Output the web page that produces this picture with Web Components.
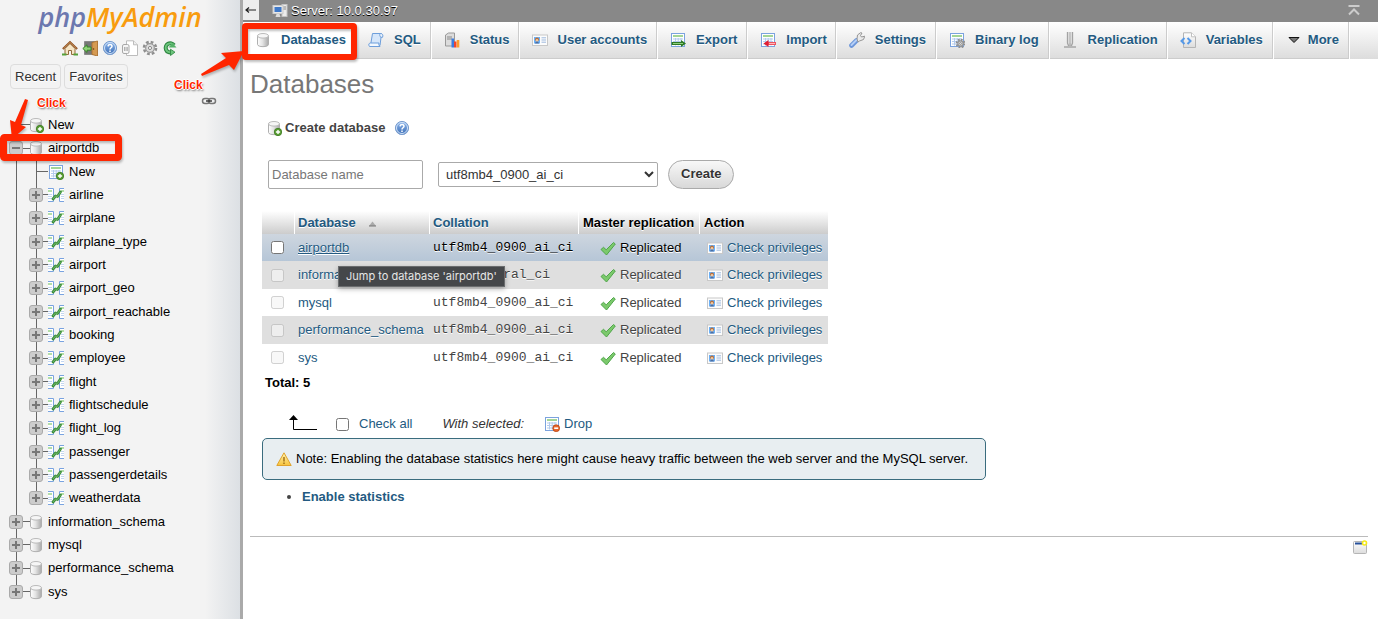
<!DOCTYPE html>
<html lang="en">
<head>
<meta charset="utf-8">
<title>phpMyAdmin - Databases</title>
<style>
  html, body { margin: 0; min-height: 100%; background: #fff; }
  body { font: 13px/20px "Liberation Sans", Arial, sans-serif; color: #000; }
</style>
</head>
<body>
<pma-app></pma-app>

<script>
const DEFS = `
<linearGradient id="cyl"><stop offset="0" stop-color="#fff"/><stop offset=".45" stop-color="#e4e4e4"/><stop offset="1" stop-color="#a9a9a9"/></linearGradient>
<linearGradient id="pg" x2="0" y2="1"><stop offset="0" stop-color="#fff"/><stop offset="1" stop-color="#dcdcdc"/></linearGradient>
<linearGradient id="bl" x2="0" y2="1"><stop offset="0" stop-color="#8fb8ee"/><stop offset="1" stop-color="#3b6db5"/></linearGradient>
<linearGradient id="yl" x2="0" y2="1"><stop offset="0" stop-color="#fff3b0"/><stop offset="1" stop-color="#f7c33c"/></linearGradient>`;
const CYL = `<path d="M2.500 3.800v8.600c0 3 11 3 11 0V3.800z" fill="url(#cyl)" stroke="#b0b0b0"/><ellipse cx="8" cy="3.800" rx="5.500" ry="2.300" fill="#f6f6f6" stroke="#bbb"/>`;
const PLUS = `<circle cx="12" cy="12" r="3.700" fill="#5a9e35" stroke="#39771c" stroke-width=".8"/><path d="M12 9.900v4.200M9.900 12h4.200" stroke="#fff" stroke-width="1.400"/>`;
const GRID = `<rect x="1.500" y="1.500" width="13" height="13" fill="#fff" stroke="#7ba3de"/><path d="M3 4h10" stroke="#8ccb7c" stroke-width="1.600"/><path d="M3 7h10M3 9.500h10M3 12h10M5.500 6v7.500M8.200 6v7.500M11 6v7.500" stroke="#b3cbed"/>`;
const GEAR = (cx, cy, r) => `<circle cx="${cx}" cy="${cy}" r="${r}" fill="none" stroke="#8e8e8e" stroke-width="2.600" stroke-dasharray="${r * .45} ${r * .335}"/><circle cx="${cx}" cy="${cy}" r="${r * .72}" fill="#ddd" stroke="#979797" stroke-width="1.200"/><circle cx="${cx}" cy="${cy}" r="${r * .26}" fill="#fff" stroke="#888"/>`;
const ICONS = {
  db: CYL,
  dbnew: CYL + PLUS,
  tablenew: GRID + PLUS,
  tabledrop: GRID + `<circle cx="12.200" cy="12.200" r="3.400" fill="#e8662a" stroke="#b9420f" stroke-width=".8"/><path d="M10.200 12.200h4" stroke="#fff" stroke-width="1.600"/>`,
  table: `<path d="M0 1h6v14H0zM11 1h5v14h-5z" fill="#fff"/><path d="M0 1.500h5.500v13H0M16 1.500h-4.500v13H16" fill="none" stroke="#79a3e0"/><path d="M0 4h4M13 4h3" stroke="#9bd38b" stroke-width="1.500"/><path d="M0 7.500h4M0 9.500h4M0 11.500h4M13 7.500h3M13 9.500h3M13 11.500h3" stroke="#c3d6f1"/><path d="M5 12l2.500-3 2 .500 3-4.500" fill="none" stroke="#3d8e3c" stroke-width="2.800" stroke-linecap="round" stroke-linejoin="round"/><path d="M5 12l2.500-3 2 .500 3-4.500" fill="none" stroke="#6db766" stroke-width="1"/>`,
  home: `<path d="M3 8.500v6h3.500v-4h3v4H13v-6L8 3.500z" fill="#f5e5c5" stroke="#946b3c"/><path d="M.8 9L8 2l7.200 7" fill="none" stroke="#8a4f20" stroke-width="1.800"/><path d="M1.500 8.300L8 2.300l6.500 6" fill="none" stroke="#d59a5f" stroke-width=".7"/><path d="M0 14.500h4.500M11.500 14.500H16" stroke="#55a13b" stroke-width="1.800"/>`,
  exit: `<path d="M2.500 1.500h10v13h-10z" fill="#777" stroke="#8b8b8b"/><path d="M10 2.500l5.500-1.500v15l-5.500-1.500z" fill="#d59a52" stroke="#a86f30" stroke-width=".9"/><circle cx="11.500" cy="9" r=".8" fill="#65400f"/><path d="M.8 8.500L5 4.800v2.200h4v3.200H5v2.200z" fill="#8fd277" stroke="#2f8122" stroke-width=".9"/>`,
  help: `<circle cx="8" cy="8" r="6.600" fill="url(#bl)" stroke="#7a9ecf"/><circle cx="8" cy="8" r="5.500" fill="none" stroke="#d3e4f9"/><path d="M6.100 6.400C6.200 3.900 10 4 10 6.300c0 1.500-2 1.500-2 3.200M8 10.600v1.500" fill="none" stroke="#fff" stroke-width="1.500"/>`,
  docs: `<path d="M4.500 .8h7l4 4v10.700h-11z" fill="#fff" stroke="#bcbcbc"/><path d="M11.500 .8v4h4" fill="#eee" stroke="#bcbcbc"/><rect x=".5" y="4.500" width="6.500" height="9" rx="1.500" fill="#f5f5f5" stroke="#a8a8a8"/><path d="M2.500 7v4M4 7v4M5.300 7v4" stroke="#a0a0a0" stroke-width=".8"/>`,
  gear: GEAR(8, 8, 6),
  reload: `<path d="M12 5.200A4.600 4.600 0 1 0 9.500 12.300" fill="none" stroke="#2d8540" stroke-width="4"/><path d="M11.800 5.400A4.400 4.400 0 1 0 9.500 12" fill="none" stroke="#6cc57c" stroke-width="2"/><path d="M6.500 7.500h8l-4-4.500z" fill="#55b268"/><path d="M8.500 9.200l4.500 3-4.500 3.300z" fill="#6cc57c" stroke="#2d8540" stroke-width=".8"/>`,
  link: `<rect x="1.500" y="5.500" width="7" height="5" rx="2.500" fill="none" stroke="#777" stroke-width="1.500"/><rect x="7.500" y="5.500" width="7" height="5" rx="2.500" fill="none" stroke="#777" stroke-width="1.500"/><path d="M5 8h6" stroke="#333" stroke-width="1.400"/>`,
  server: `<rect x="10" y="1.500" width="5" height="12" fill="#ececec" stroke="#c4c4c4"/><path d="M11 4h3M11 6h3" stroke="#888"/><rect x="1" y="2.500" width="10" height="8" fill="#e8e8e8" stroke="#ccc"/><rect x="2.500" y="4" width="7" height="5" fill="#3f79c9"/><path d="M4.500 11h3l1 3h-5z" fill="#ddd"/>`,
  sql: `<path d="M4.500 1.500h9L12 13.500H2.500z" fill="#d5e6fa" stroke="#6d9edb"/><path d="M12.500 1.500c-1.500 1-.5 3.500.5 3.800h1.500c1-2 0-3.800-2-3.800z" fill="#eef5fd" stroke="#6d9edb"/><path d="M1.500 14.500c-1.500-2-.5-3.500 1-3.500h8.500c-.5 1.500 0 2.500 1 3.500z" fill="#f3f8fe" stroke="#6d9edb"/>`,
  status: `<path d="M1.500 3l3-2h6v11l-2 2h-7z" fill="#dcdcdc" stroke="#999"/><path d="M3 5h5M3 7h5" stroke="#8a8a8a"/><path d="M7.500 6.500h2.500v9H7.500z" fill="#3b7ce0"/><path d="M10 9.500h2.500v6H10z" fill="#f1432f"/><path d="M12.700 8h2.600v7.500h-2.600z" fill="#ff9d2c"/>`,
  users: `<rect x=".5" y="3" width="15" height="10.500" fill="#fcfcfc" stroke="#c8c8c8"/><rect x="2" y="5" width="6" height="6.500" fill="#6cb0f5"/><circle cx="5" cy="7.500" r="2" fill="#b96f3a"/><circle cx="5" cy="8.300" r="1.200" fill="#f3c99d"/><path d="M3 11.500c0-2.500 4-2.500 4 0z" fill="#4a6fa5"/><path d="M9.500 5.800h4.500M9.500 8h4.500M9.500 10.200h4.500" stroke="#9db9de"/>`,
  export: GRID + `<path d="M1.500 11.500h10" stroke="#2e7a26" stroke-width="3"/><path d="M11 8l5 3.500-5 3.500z" fill="#2e7a26"/><path d="M3 11.500h10" stroke="#8ed07e"/>`,
  import: GRID + `<path d="M8 11.500h8" stroke="#ee5360" stroke-width="3"/><path d="M8.500 8l-5 3.500 5 3.500z" fill="#e01f34"/><path d="M9 11.500h6" stroke="#ffb6b9"/>`,
  wrench: `<path d="M2.500 13.500l5-5" stroke="#6b95d9" stroke-width="4.600" stroke-linecap="round"/><path d="M2.500 13l5-5" stroke="#b4cef6" stroke-width="2" stroke-linecap="round"/><path d="M8 7l.5-4 3-2.300 1.500.3-1.500 2.500 1 1.500 3.300-.8-1.300 3.300-4 1.500-1.500 1z" fill="#e9e9e9" stroke="#969696"/>`,
  binlog: GRID + GEAR(11.5, 11.5, 3.6),
  repl: `<path d="M5.500 0v11l1.200 3M10.500 0v11l-1.200 3M8 0v14" fill="none" stroke="#a3a3a3" stroke-width="1.300"/><path d="M6.800 0v11M9.200 0v11" stroke="#d8d8d8"/><path d="M2 15h12" stroke="#aaa" stroke-width="1.600"/>`,
  vars: `<path d="M3.500 .8h8l4 4v10.700h-12z" fill="url(#pg)" stroke="#b5b5b5"/><path d="M11.500 .8v4h4" fill="#fff" stroke="#c0c0c0"/><path d="M4.500 6L1.500 9l3 3M7.500 6l3 3-3 3" fill="none" stroke="#5599e8" stroke-width="2"/>`,
  more: `<path d="M3 5.500h10L8 10.500z" fill="#777" stroke="#111"/>`,
  sort: `<path d="M5 11h7L8.500 6.500z" fill="#aaa"/><path d="M5 11h7" stroke="#777"/>`,
  check: `<path d="M1 9.500l2.500-2.200 2.700 2.500L13.500 2.500l1.800 1.500-8.800 11z" fill="#7cc96c" stroke="#4fa64a"/>`,
  warn: `<path d="M8 1.800L15.200 14.500H.8z" fill="url(#yl)" stroke="#dfa22c" stroke-linejoin="round"/><path d="M8 6v4.500M8 11.500v1.500" stroke="#a9781e" stroke-width="1.600"/>`,
  window: `<rect x="1.500" y="2.500" width="13" height="12" rx="1" fill="url(#pg)" stroke="#b5b5b5"/><path d="M3 4.500h7" stroke="#27509b" stroke-width="2"/><circle cx="12.500" cy="4" r="2" fill="#fff" stroke="#f5ea18" stroke-width="1.600"/>`,
  top: `<path d="M2.500 3h11" stroke="#ccc" stroke-width="2"/><path d="M3 11.500l5-5 5 5" fill="none" stroke="#ccc" stroke-width="2"/>`,
  back: `<path d="M3 8h10M6 5.500L3 8l3 2.500" fill="none" stroke="#222" stroke-width="1.200"/>`
};

function define(name, html, setup) {
  const tpl = document.createElement('template');
  tpl.innerHTML = html;
  customElements.define(name, class extends HTMLElement {
    constructor() {
      super();
      this.attachShadow({ mode: 'open' }).append(tpl.content.cloneNode(true));
    }
    connectedCallback() { if (setup) setup(this, this.shadowRoot); }
  });
}

define('pma-icon', `<style>:host{display:block;flex:none;width:16px;height:16px}svg{display:block}</style>
<svg width="16" height="16" viewBox="0 0 16 16" aria-hidden="true"></svg>`, (el, root) => {
  root.querySelector('svg').innerHTML = `<defs>${DEFS}</defs>` + (ICONS[el.getAttribute('name')] || '');
});

define('pma-logo', `<style>
  :host{display:block;text-align:center;height:33px}
  a{font:italic 600 27px/33px "Open Sans","Noto Sans",sans-serif;color:#f89c0e;text-decoration:none}
  span{color:#6c78af}
</style><a href="#"><span>php</span>MyAdmin</a>`);

define('pma-tree-row', `<style>
  :host{display:grid;grid-template-columns:14px 16px auto;column-gap:5px;align-items:center;height:23px;padding-left:9px;
    background:linear-gradient(#666,#666) 16px 0/1px 100% no-repeat,linear-gradient(#666,#666) 16px 50%/14px 1px no-repeat}
  :host(:nth-child(3n+2)){height:24px}
  :host([first]){background-position:16px 12px,16px 50%}
  :host([last]){background-size:1px 50%,14px 1px}
  :host([level="1"]){padding-left:29px;
    background:linear-gradient(#666,#666) 16px 0/1px 100% no-repeat,linear-gradient(#666,#666) 36px 50%/12px 1px no-repeat,linear-gradient(#666,#666) 36px 0/1px 100% no-repeat}
  :host([level="1"][end]){background-size:1px 100%,12px 1px,1px 50%}
  button{width:14px;height:14px;padding:0;border:1px solid #aaa;border-radius:3px;background:#ccc;display:block}
  :host([leaf]) button{visibility:hidden}
  svg{display:block}
  :host([open]) .v{display:none}
  a{color:#000;text-decoration:none;line-height:20px;margin-left:-1px}
  :host([level="1"]) a{margin-left:0}
</style>
<button type="button" aria-label="Toggle"><svg width="12" height="12" viewBox="0 0 12 12" stroke="#777" stroke-width="2"><path d="M2 6h8"/><path class="v" d="M6 2v8"/></svg></button>
<pma-icon></pma-icon><a href="#"><slot></slot></a>`, (el, root) => {
  const icon = document.createElement('pma-icon');
  icon.setAttribute('name', el.getAttribute('icon'));
  root.querySelector('pma-icon').replaceWith(icon);
});

define('pma-sidebar', `<style>
  :host{display:block;flex:none;width:240px;border-right:3px solid #aaa;background:linear-gradient(90deg,#f3f3f3 0,#f3f3f3 205px,#dce0e4 240px)}
  .tools{display:flex;justify-content:center;gap:4px;padding:7px 0 8px}
  .tools a{display:block}
  .quick{display:flex;gap:3px;padding-left:10px}
  .quick button{font:inherit;color:#333;height:25px;padding:0 4px;border:1px solid #ddd;border-radius:4px;background:#f3f3f3;text-shadow:0 1px 0 #fff}
  .link{display:flex;justify-content:flex-end;padding:4px 23px 0 0}
  nav{margin-top:4px}
</style>
<pma-logo></pma-logo>
<div class="tools">
  <a href="#" aria-label="Home"><pma-icon name="home"></pma-icon></a>
  <a href="#" aria-label="Log out"><pma-icon name="exit"></pma-icon></a>
  <a href="#" aria-label="Help"><pma-icon name="help"></pma-icon></a>
  <a href="#" aria-label="Documentation"><pma-icon name="docs"></pma-icon></a>
  <a href="#" aria-label="Panel settings"><pma-icon name="gear"></pma-icon></a>
  <a href="#" aria-label="Reload"><pma-icon name="reload"></pma-icon></a>
</div>
<div class="quick"><button type="button">Recent</button><button type="button">Favorites</button></div>
<div class="link"><pma-icon name="link"></pma-icon></div>
<nav>
<pma-tree-row leaf first icon="dbnew">New</pma-tree-row>
<pma-tree-row open icon="db">airportdb</pma-tree-row>
<pma-tree-row leaf level="1" icon="tablenew">New</pma-tree-row>
${['airline','airplane','airplane_type','airport','airport_geo','airport_reachable','booking','employee','flight','flightschedule','flight_log','passenger','passengerdetails','weatherdata'].map((t, i, a) => `<pma-tree-row level="1" icon="table"${i === a.length - 1 ? ' end' : ''}>${t}</pma-tree-row>`).join('')}
<pma-tree-row icon="db">information_schema</pma-tree-row>
<pma-tree-row icon="db">mysql</pma-tree-row>
<pma-tree-row icon="db">performance_schema</pma-tree-row>
<pma-tree-row last icon="db">sys</pma-tree-row>
</nav>`);

define('pma-server-bar', `<style>
  :host{display:flex;align-items:center;height:22px;background:#888;color:#fff;text-shadow:0 1px 0 #000}
  button{width:16px;height:20px;padding:0;border:0;background:#eee;align-self:flex-start}
  .srv{margin-left:13px}
  a{color:#fff;text-decoration:none;margin-left:3px;flex:1}
  .top{margin-right:16px}
</style>
<button type="button" aria-label="Hide panel"><pma-icon name="back"></pma-icon></button>
<pma-icon class="srv" name="server"></pma-icon><a href="#">Server: 10.0.30.97</a><pma-icon class="top" name="top"></pma-icon>`);

define('pma-tab', `<style>
  :host{display:block;box-sizing:border-box;height:37px;border-right:1px solid #fff;box-shadow:inset -1px -1px 0 #ccc}
  a{display:flex;align-items:center;gap:10px;height:35px;padding:0 10px 0 12px;font-weight:bold;color:#235a81;text-decoration:none;text-shadow:0 1px 0 #fff;white-space:nowrap}
  :host(:nth-of-type(3n)) a{padding-right:9px}
  :host([active]){background:#fff;border-right:0;box-shadow:none}
  :host([compact]) a{gap:6px}
</style><a href="#"><pma-icon></pma-icon><slot></slot></a>`, (el, root) => {
  const icon = document.createElement('pma-icon');
  icon.setAttribute('name', el.getAttribute('icon'));
  root.querySelector('pma-icon').replaceWith(icon);
});

define('pma-tabs', `<style>:host{display:flex;height:37px;background:linear-gradient(#fff,#dcdcdc)}</style>
<pma-tab active icon="db">Databases</pma-tab>
<pma-tab icon="sql">SQL</pma-tab>
<pma-tab icon="status">Status</pma-tab>
<pma-tab icon="users">User accounts</pma-tab>
<pma-tab icon="export">Export</pma-tab>
<pma-tab icon="import">Import</pma-tab>
<pma-tab icon="wrench">Settings</pma-tab>
<pma-tab icon="binlog">Binary log</pma-tab>
<pma-tab icon="repl">Replication</pma-tab>
<pma-tab icon="vars">Variables</pma-tab>
<pma-tab compact icon="more">More</pma-tab>`);

define('pma-create-form', `<style>
  :host{display:block;margin-top:19px;padding-left:4px}
  label.title{display:flex;align-items:center;height:20px;font-weight:bold;color:#444;gap:3px}
  .help{margin-left:6px}
  form{display:flex;align-items:center;height:30px;margin:21px 0 0 2px}
  input,select{font:inherit;box-sizing:border-box;border:1px solid #aaa;border-radius:2px;background:#fff;color:#333}
  input{width:155px;height:29px;padding:0 3px}
  input::placeholder{color:#777}
  select{width:220px;height:25px;padding:0 3px;margin:0 10px 0 15px}
  button{font:bold 13px/20px "Liberation Sans",Arial,sans-serif;height:29px;padding:0 12px;border:1px solid #aaa;border-radius:15px;background:linear-gradient(#f8f8f8,#d8d8d8);color:#333;text-shadow:0 1px 0 #fff}
</style>
<label class="title" for="name"><pma-icon name="dbnew"></pma-icon>Create database<pma-icon class="help" name="help"></pma-icon></label>
<form><input id="name" placeholder="Database name"><select aria-label="Collation"><option>utf8mb4_0900_ai_ci</option></select><button type="button">Create</button></form>`);

const DBS = [['airportdb','utf8mb4_0900_ai_ci'],['information_schema','utf8_general_ci'],['mysql','utf8mb4_0900_ai_ci'],['performance_schema','utf8mb4_0900_ai_ci'],['sys','utf8mb4_0900_ai_ci']];
define('pma-db-table', `<style>
  :host{display:block;position:relative;margin-top:22px}
  table{border-collapse:collapse;table-layout:fixed;width:566px}
  th{height:23px;padding:0 4px;text-align:left;color:#000;background:linear-gradient(#fff,#ccc);text-shadow:0 1px 0 #fff;white-space:nowrap}
  th+th{box-shadow:inset 1px 0 0 #fff}
  th+th+th+th{padding-left:5px}
  td{height:27px;padding:0 4px;color:#444;white-space:nowrap;text-shadow:0 1px 0 #fff}
  tr:nth-child(even) td{height:28px;background:#dfdfdf}
  tr.hover td{background:linear-gradient(#ced6df,#b6c6d7);color:#000}
  a{color:#235a81;text-decoration:none}
  tr.hover td:nth-child(2) a{text-decoration:underline}
  th .in,td .in{display:flex;align-items:center;gap:4px}
  th .in{gap:8px}
  .rep{padding-left:18px}
  .act{padding-left:4px}
  td.mono{font-family:"Liberation Mono","Courier New",monospace}
  input{display:block;margin:0 0 0 5px}
  .tip{position:absolute;left:76px;top:55px;box-sizing:border-box;height:21px;padding:0 7px;border:1px solid #6a6c6e;background:#45474a;color:#e6e6e6;font:11px/19px Inter,sans-serif;white-space:nowrap;box-shadow:0 2px 5px rgba(0,0,0,.3)}
  .total{font-weight:bold;line-height:24px;padding-left:3px;text-shadow:0 1px 0 #fff}
</style>
<table>
<colgroup><col style="width:32px"><col style="width:135px"><col style="width:149px"><col style="width:121px"><col style="width:129px"></colgroup>
<thead><tr><th></th><th><a href="#" class="in">Database<pma-icon name="sort"></pma-icon></a></th><th><a href="#">Collation</a></th><th>Master replication</th><th>Action</th></tr></thead>
<tbody>
${DBS.map(([n, c], i) => `<tr${i ? '' : ' class="hover"'}><td><input type="checkbox" aria-label="Select ${n}"${i ? ' disabled' : ''}></td><td><a href="#">${n}</a></td><td class="mono">${c}</td><td><span class="in rep"><pma-icon name="check"></pma-icon>Replicated</span></td><td><a href="#" class="in act"><pma-icon name="users"></pma-icon>Check privileges</a></td></tr>`).join('')}
</tbody></table>
<div class="total">Total: 5</div>
<div class="tip" role="tooltip">Jump to database 'airportdb'</div>`);

define('pma-bulk-actions', `<style>
  :host{display:flex;align-items:center;height:22px;margin-top:18px;padding-left:26px;text-shadow:0 1px 0 #fff}
  input{margin:0 10px 0 18px}
  label,a{color:#235a81;text-decoration:none}
  i{color:#333;margin:0 20px 0 30px}
  a{display:flex;align-items:center;gap:4px}
</style>
<svg width="30" height="18" viewBox="0 0 30 18"><path d="M5.500 4v10.500H29" fill="none" stroke="#000"/><path d="M1 5h9L5.500 0z"/></svg>
<input type="checkbox" id="all"><label for="all">Check all</label><i>With selected:</i><a href="#"><pma-icon name="tabledrop"></pma-icon>Drop</a>`);

define('pma-notice', `<style>
  :host{display:flex;align-items:center;gap:4px;width:fit-content;box-sizing:border-box;height:42px;margin-top:3px;padding:0 17px 0 13px;border:1px solid #3a6c7e;border-radius:5px;background:#e8eef1}
</style><pma-icon name="warn"></pma-icon><span><slot></slot></span>`);

define('pma-main', `<style>
  :host{display:block;flex:1;min-width:0}
  main{padding:10px 10px 0 7px}
  h2{margin:0;font-size:26px;line-height:30px;font-weight:normal;color:#777}
  section{padding-left:12px}
  ul{margin:7px 0 0;padding-left:40px;color:#444}
  li a{font-weight:bold;color:#235a81;text-decoration:none}
  hr{margin:29px 0 2px;border:0;border-top:1px solid #bbb}
  .foot{display:flex;justify-content:flex-end}
</style>
<pma-server-bar></pma-server-bar>
<pma-tabs></pma-tabs>
<main>
  <h2>Databases</h2>
  <section>
    <pma-create-form></pma-create-form>
    <pma-db-table></pma-db-table>
    <pma-bulk-actions></pma-bulk-actions>
    <pma-notice>Note: Enabling the database statistics here might cause heavy traffic between the web server and the MySQL server.</pma-notice>
    <ul><li><a href="#">Enable statistics</a></li></ul>
  </section>
  <hr>
  <div class="foot"><pma-icon name="window"></pma-icon></div>
</main>`);

/* Tutorial markup drawn over the interface: frames, arrows and "Click" labels. */
define('pma-callouts', `<style>
  :host{position:absolute;left:0;top:0;pointer-events:none}
  svg{display:block;filter:drop-shadow(1px 2px 1px rgba(0,0,0,.25))}
  b{position:absolute;font-size:12px;line-height:14px;color:#ff2600;text-shadow:1px 0 #fff,-1px 0 #fff,0 1px #fff,0 -1px #fff,1px 2px 2px rgba(0,0,0,.5)}
  .one{left:37px;top:96px}
  .two{left:174px;top:78px}
</style>
<svg width="370" height="170" viewBox="0 0 370 170">
  <rect x="245" y="26" width="109" height="31" rx="1" fill="none" stroke="#ff2600" stroke-width="6"/>
  <rect x="3.500" y="137.500" width="115" height="20" rx="1" fill="none" stroke="#ff2600" stroke-width="7"/>
  <path d="M201 74L226 58L221 53L244 51L234 70L229 65L202 76Z" fill="#ff2600"/>
  <path d="M25 99L15 122L10 120L12 139L26 127L21 125L28 100Z" fill="#ff2600"/>
</svg>
<b class="one">Click</b><b class="two">Click</b>`);

define('pma-app', `<style>:host{display:flex;min-height:100vh;position:relative}</style>
<pma-sidebar></pma-sidebar><pma-main></pma-main><pma-callouts></pma-callouts>`);
</script>
</body>
</html>
